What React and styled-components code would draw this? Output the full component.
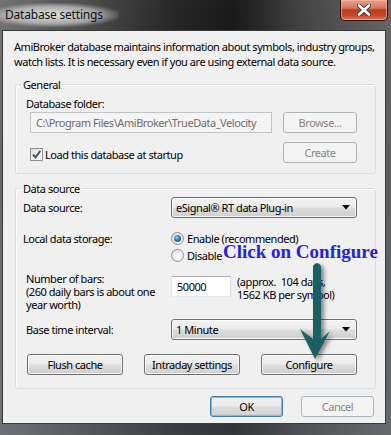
import React from 'react';
import styled, { createGlobalStyle, css } from 'styled-components';

const GlobalStyle = createGlobalStyle`
  html, body {
    margin: 0;
    padding: 0;
    background: #1b1b1b;
  }
  * { box-sizing: border-box; }
`;

const uiFont = `"Noto Sans", "Open Sans", "DejaVu Sans", sans-serif`;

const Window = styled.div`
  position: relative;
  width: 391px;
  height: 435px;
  display: flex;
  flex-direction: column;
  padding: 0 5px 11px 2px;
  font-family: ${uiFont};
  font-size: 11px;
  letter-spacing: -0.45px;
  color: #000;
  white-space: nowrap;
  background:
    linear-gradient(180deg, rgba(255,255,255,0.06) 0%, rgba(0,0,0,0) 40%, rgba(120,130,140,0.35) 100%),
    linear-gradient(90deg, #6a6a6a 0%, #4a4a4a 18%, #1a1a1a 45%, #0d0d0d 60%, #3b3b3b 78%, #5d5d5d 100%);
  overflow: hidden;
`;

const TitleBar = styled.div`
  height: 30px;
  display: flex;
  justify-content: space-between;
  align-items: flex-start;
  margin-left: -2px;
  margin-right: -5px;
`;

const Title = styled.span`
  margin-top: 3px;
  padding: 4px 16px 5px 5px;
  font-size: 12px;
  line-height: 15px;
  letter-spacing: -0.2px;
  color: #101010;
  background: radial-gradient(ellipse at 45% 50%, rgba(240,240,240,0.9) 0%, rgba(220,220,220,0.6) 50%, rgba(200,200,200,0) 75%);
`;

const CloseButton = styled.div`
  width: 48px;
  height: 21px;
  margin-right: 3px;
  display: flex;
  align-items: center;
  justify-content: center;
  border: 1px solid #3c1008;
  border-top: none;
  border-radius: 0 0 5px 5px;
  background: linear-gradient(180deg, #e7a08c 0%, #d9785e 40%, #b83a1f 50%, #c4452a 75%, #e0775a 100%);
  box-shadow: inset 0 0 0 1px rgba(255,200,180,0.5);
`;

const Client = styled.div`
  flex: 1;
  background: #f0f0f0;
  border: 1px solid #3a3a3a;
  padding: 8px 9px 0 0;
  display: flex;
  flex-direction: column;
`;

const Intro = styled.p`
  margin: 0 0 0 11px;
  line-height: 15px;
`;

const Group = styled.fieldset`
  margin: ${p => p.$top}px 0 0 12px;
  padding: 0 18px ${p => p.$bottom}px 0;
  border: 1px solid #d5dfe5;
  border-radius: 3px;
  min-width: 0;
  box-shadow: 1px 1px 0 #fff inset;
`;

const Legend = styled.legend`
  margin-left: 5px;
  padding: 0 2px;
  line-height: 15px;
`;

const Text = styled.div`
  line-height: ${p => p.$lh || 15}px;
  padding-left: ${p => p.$indent || 0}px;
`;

const Row = styled.div`
  display: flex;
  align-items: ${p => p.$align || 'center'};
  justify-content: ${p => p.$justify || 'flex-start'};
  margin-top: ${p => p.$top || 0}px;
  padding-left: ${p => p.$left || 0}px;
`;

const LabelCell = styled.div`
  width: 155px;
  flex: none;
  padding-left: ${p => p.$indent || 7}px;
  padding-top: ${p => p.$pt || 0}px;
  line-height: ${p => p.$lh || 15}px;
`;

const TextBox = styled.div`
  width: ${p => p.$w}px;
  height: 21px;
  flex: none;
  display: flex;
  align-items: center;
  padding-left: 5px;
  margin-top: ${p => p.$mt || 0}px;
  overflow: hidden;
  border: 1px solid;
  border-color: #abadb3 #dbdfe6 #e3e9ef #e2e3ea;
  background: #fff;
  ${p => p.$disabled && css`
    border-color: #c2c4c8;
    background: #f4f4f4;
    color: #6d6d6d;
  `}
`;

const Button = styled.div`
  width: ${p => p.$w || 74}px;
  height: 21px;
  flex: none;
  display: flex;
  align-items: center;
  justify-content: center;
  border: 1px solid #707070;
  border-radius: 3px;
  background: linear-gradient(180deg, #f2f2f2 0%, #ebebeb 49%, #dddddd 51%, #cfcfcf 100%);
  box-shadow: inset 0 0 0 1px rgba(255,255,255,0.75);
  ${p => p.$disabled && css`
    border-color: #adb2b5;
    background: #f4f4f4;
    color: #838383;
    box-shadow: none;
  `}
  ${p => p.$default && css`
    border-color: #3c7fb1;
    box-shadow: inset 0 0 0 1px #58c9f5;
  `}
`;

const Select = styled.div`
  width: 186px;
  height: 21px;
  flex: none;
  display: flex;
  align-items: center;
  justify-content: space-between;
  padding: 0 6px 0 4px;
  border: 1px solid #707070;
  border-radius: 3px;
  background: linear-gradient(180deg, #f2f2f2 0%, #ebebeb 49%, #dddddd 51%, #cfcfcf 100%);
  box-shadow: inset 0 0 0 1px rgba(255,255,255,0.75);
`;

const Check = styled.span`
  width: 13px;
  height: 13px;
  flex: none;
  margin-right: 2px;
  border: 1px solid #8e8f8f;
  background: linear-gradient(135deg, #dcdcdc 0%, #f6f6f6 60%, #ffffff 100%);
  display: flex;
  align-items: center;
  justify-content: center;
`;

const Radio = styled.span`
  width: 13px;
  height: 13px;
  flex: none;
  margin-right: 3px;
  border-radius: 50%;
  border: 1px solid #8e8f8f;
  background: radial-gradient(circle at 60% 65%, #ffffff 0%, #e6e6e6 60%, #d2d2d2 100%);
  display: flex;
  align-items: center;
  justify-content: center;
  &::after {
    content: '';
    display: ${p => (p.$on ? 'block' : 'none')};
    width: 7px;
    height: 7px;
    border-radius: 50%;
    background: radial-gradient(circle at 40% 35%, #9fd3ff 0%, #2b77c4 45%, #0c3f7a 100%);
  }
`;

const OptionRow = styled.div`
  display: flex;
  align-items: center;
  height: 17px;
`;

const Stack = styled.div`
  display: flex;
  flex-direction: column;
`;

const Footer = styled.div`
  display: flex;
  justify-content: flex-end;
  gap: 18px;
  margin-top: 7px;
  padding-right: 2px;
`;

const Callout = styled.div`
  position: absolute;
  left: 223px;
  top: 242px;
  font-family: "Liberation Serif", "Times New Roman", serif;
  font-weight: bold;
  font-size: 19px;
  line-height: 20px;
  letter-spacing: 0;
  color: #2222e0;
`;

const ArrowLayer = styled.svg`
  position: absolute;
  left: 0;
  top: 0;
  pointer-events: none;
  filter: drop-shadow(3px 2px 2px rgba(0, 0, 0, 0.45));
`;

const Caret = () => (
  <svg width="8" height="5" viewBox="0 0 8 5">
    <path d="M0 0 H8 L4 4.5 Z" fill="#000" />
  </svg>
);

export default function App() {
  return (
    <>
      <GlobalStyle />
      <Window>
        <TitleBar>
          <Title>Database settings</Title>
          <CloseButton>
            <svg width="14" height="12" viewBox="0 0 14 12">
              <path d="M2 1.5 L12 10.5 M12 1.5 L2 10.5" stroke="#3a3a3a" strokeWidth="4.5" strokeLinecap="round" />
              <path d="M2 1.5 L12 10.5 M12 1.5 L2 10.5" stroke="#ffffff" strokeWidth="2.6" strokeLinecap="round" />
            </svg>
          </CloseButton>
        </TitleBar>

        <Client>
          <Intro>
            AmiBroker database maintains information about symbols, industry groups,<br />
            watch lists. It is necessary even if you are using external data source.
          </Intro>

          <Group $top={8} $bottom={10}>
            <Legend>General</Legend>
            <Text $indent={10} style={{ marginTop: 4 }}>Database folder:</Text>
            <Row $left={14} $justify="space-between" $top={1}>
              <TextBox $w={242} $disabled>C:\Program Files\AmiBroker\TrueData_Velocity</TextBox>
              <Button $disabled>Browse...</Button>
            </Row>
            <Row $left={14} $justify="space-between" $align="flex-end" $top={9}>
              <OptionRow>
                <Check>
                  <svg width="11" height="11" viewBox="0 0 11 11">
                    <path d="M2 5.5 L4.5 8.3 L9.3 1.8" stroke="#3d5289" strokeWidth="2" fill="none" />
                  </svg>
                </Check>
                Load this database at startup
              </OptionRow>
              <Button $disabled>Create</Button>
            </Row>
          </Group>

          <Group $top={7} $bottom={13}>
            <Legend>Data source</Legend>
            <Row $top={1}>
              <LabelCell>Data source:</LabelCell>
              <Select>
                <span>eSignal® RT data Plug-in</span>
                <Caret />
              </Select>
            </Row>
            <Row $top={12} $align="flex-start">
              <LabelCell $pt={1}>Local data storage:</LabelCell>
              <Stack>
                <OptionRow><Radio $on />Enable (recommended)</OptionRow>
                <OptionRow><Radio />Disable</OptionRow>
              </Stack>
            </Row>
            <Row $top={8} $align="flex-start">
              <LabelCell $indent={10} $lh={13}>
                Number of bars:<br />
                (260 daily bars is about one<br />
                year worth)
              </LabelCell>
              <TextBox $w={60} $mt={4}>50000</TextBox>
              <Text $lh={13} style={{ marginTop: 3, marginLeft: 6 }}>
                (approx.&nbsp; 104 days,<br />1562 KB per symbol)
              </Text>
            </Row>
            <Row $top={8}>
              <LabelCell $indent={10}>Base time interval:</LabelCell>
              <Select>
                <span>1 Minute</span>
                <Caret />
              </Select>
            </Row>
            <Row $top={14} $left={11} $justify="space-between">
              <Button $w={96}>Flush cache</Button>
              <Button $w={96}>Intraday settings</Button>
              <Button $w={96}>Configure</Button>
            </Row>
          </Group>

          <Footer>
            <Button $w={73} $default>OK</Button>
            <Button $w={73} $disabled>Cancel</Button>
          </Footer>
        </Client>

        <Callout>Click on Configure</Callout>
        <ArrowLayer width="391" height="435" viewBox="0 0 391 435">
          <path d="M313 266 Q317 260 321 266 L321 339 L330 331 L315 359 L300 329 L313 339 Z" fill="#1b5e63" />
        </ArrowLayer>
      </Window>
    </>
  );
}
